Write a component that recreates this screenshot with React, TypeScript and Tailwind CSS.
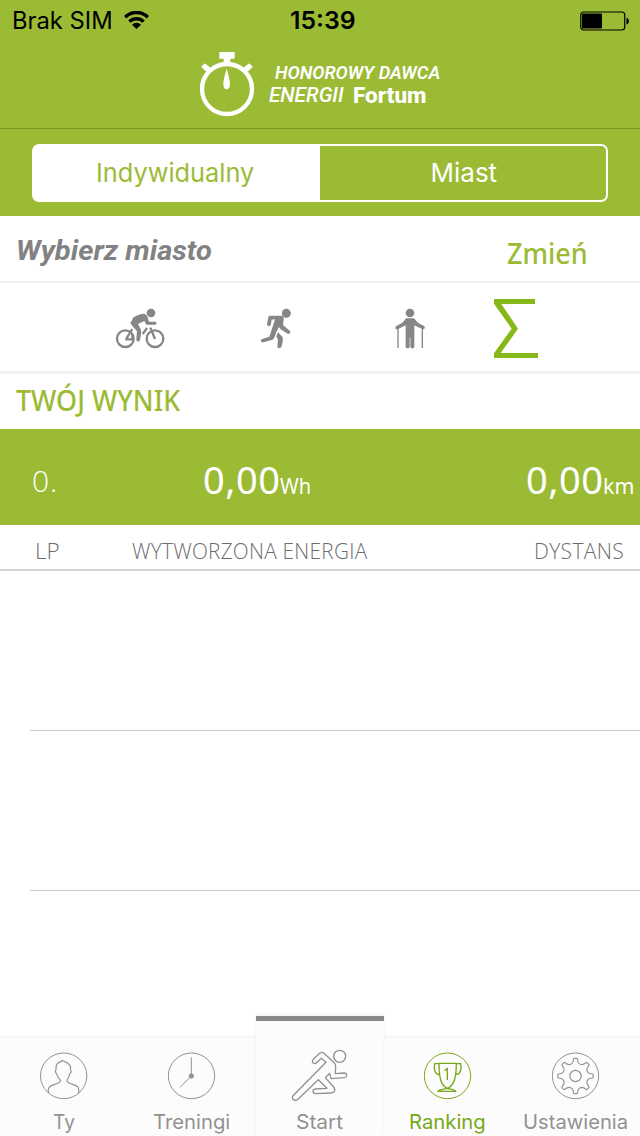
import { useLayoutEffect, useRef, useState } from "react";
import type { ReactNode } from "react";

const NOTO = "font-['Noto_Sans','Open_Sans',sans-serif]";
const OPEN = "font-['Open_Sans','Noto_Sans',sans-serif]";
const ROBOTO = "font-['Roboto','Noto_Sans',sans-serif]";
const INTER = "font-['Inter',sans-serif]";

/** One line of text, condensed or widened horizontally to fill `width` pixels. */
function Fit({ width, className = "", children }: { width: number; className?: string; children: ReactNode }) {
  const ref = useRef<HTMLSpanElement>(null);
  const [scale, setScale] = useState(1);
  useLayoutEffect(() => {
    if (ref.current) setScale(width / ref.current.offsetWidth);
  }, [width]);
  return (
    <span className="block shrink-0" style={{ width }}>
      <span
        ref={ref}
        className={`inline-block origin-left whitespace-nowrap leading-none align-top ${className}`}
        style={{ transform: `scaleX(${scale})` }}
      >
        {children}
      </span>
    </span>
  );
}

function StatusBar() {
  return (
    <div className="grid h-10 grid-cols-3 items-center pt-px text-black">
      <div className="flex items-center gap-[11px] pl-[12px]">
        <Fit width={101} className={`${INTER} text-[24px]`}>Brak SIM</Fit>
        <svg className="-mt-0.5 h-[18px] w-[25px]" viewBox="0 0 25 18" fill="none" stroke="black" strokeWidth="3.400">
          <path d="M1.2 6.2a16 16 0 0 1 22.6 0" />
          <path d="M5.4 10.6a10.2 10.2 0 0 1 14.2 0" />
          <path d="M12.5 18 8 13.700a6 6 0 0 1 9 0z" fill="black" stroke="none" />
        </svg>
      </div>
      <div className="flex justify-center pl-1.5 pt-px">
        <Fit width={66} className={`${INTER} text-[24px] font-semibold`}>15:39</Fit>
      </div>
      <div className="flex justify-end pr-[10px]">
        <svg className="h-5 w-[50px]" viewBox="0 0 50 20">
          <rect x="0.75" y="1" width="44" height="18" rx="3" fill="none" stroke="black" strokeWidth="1.2" />
          <rect x="2" y="2.6" width="20" height="15" rx="1" fill="black" />
          <path d="M46.5 6.8c3.2.8 3.2 6 0 6.600z" fill="black" />
        </svg>
      </div>
    </div>
  );
}

function Logo() {
  return (
    <div className="flex h-[88px] pl-[199px] pt-[11px]">
      <svg className="h-[66px] w-[56px]" viewBox="27 18 168 198" fill="#fff">
        <circle cx="111" cy="132" r="75" fill="none" stroke="#fff" strokeWidth="13" />
        <path d="M90 21h42q2 0 2 2v16q0 2-2 2h-11v12h-20V41H90q-2 0-2-2V23q0-2 2-2z" />
        <path d="M110 71c4 14 10 32 10 46 0 10-4 16-10 16s-10-6-10-16c0-14 6-32 10-46z" />
        <path d="M37 65l8-7 13 11-9 8zM185 65l-8-7-13 11 9 8z" stroke="#fff" strokeWidth="5" strokeLinejoin="round" />
      </svg>
      <div className="pl-[14px] pt-[13px] text-white">
        <div className="h-[18px] pl-1.5">
          <Fit width={165} className={`${ROBOTO} text-[18px] font-semibold italic`}>HONOROWY DAWCA</Fit>
        </div>
        <div className="flex gap-[9px] pt-[3px]">
          <Fit width={75} className={`${ROBOTO} text-[21px] font-medium italic`}>ENERGII</Fit>
          <Fit width={73} className={`${ROBOTO} -mt-px text-[22.5px] font-extrabold`}>Fortum</Fit>
        </div>
      </div>
    </div>
  );
}

function Segments() {
  return (
    <div className="h-[87px] px-8 pt-[15px]">
      <div className="flex h-[58px] overflow-hidden rounded-[7px] bg-white">
        <div className="flex w-72 items-center justify-center pr-0.5 text-[#9bbb35]">
          <Fit width={158} className={`${INTER} text-[26px]`}>Indywidualny</Fit>
        </div>
        <div className="my-0.5 mr-0.5 flex flex-1 items-center justify-center rounded-r-[5px] bg-[#9cbb35] pl-0.5 text-white">
          <Fit width={67} className={`${INTER} text-[26px]`}>Miast</Fit>
        </div>
      </div>
    </div>
  );
}

function Sports() {
  return (
    <div className="flex h-[91px] items-start border-b-[3px] border-[#f2f2f2] pl-[115px] pt-4 text-[#868686]">
      <svg className="mt-2 h-[42px] w-[50px]" viewBox="45 51 150 126" fill="currentColor">
        <g fill="none" stroke="currentColor" strokeWidth="7">
          <circle cx="76" cy="146" r="25" />
          <circle cx="165" cy="146" r="25" />
          <path d="M76 148h21v-15M79 146l18-29M165 147l-14-34M128 132l13-18" />
        </g>
        <circle cx="153" cy="69" r="13" />
        <path d="M97 85c10-8 23-13 32-14 7 0 12 4 14 11l4 13h18c6 0 6 9 0 9h-22c-4 0-6-2-7-6l-3-5-19 9 8 16c3 5 0 25-2 31-2 8-12 7-11-1l2-24-17-20c-4-5-2-10 4-14z" />
      </svg>
      <svg className="ml-[95px] mt-2 h-[42px] w-8" viewBox="60 51 96 126" fill="currentColor">
        <circle cx="139" cy="70" r="13.500" />
        <path d="M88 77h36c6 1 8 5 7 11l-2 17 20 17c5 5 0 11-6 9l-22-14-4-6-9 17c-4 14-6 19-13 22l-25 7c-8 1-10-8-3-10l21-7 8-24 9-28-10 1-3 15c-2 6-11 5-11-1l4-21c1-3 1-4 3-5z" />
        <path d="M114 127l13 13c4 5-1 27-3 31-2 5-12 5-12-2l2-19-5-11z" />
      </svg>
      <svg className="ml-[102px] mt-2 h-[42px] w-8" viewBox="462 51 96 126" fill="currentColor">
        <circle cx="510" cy="69" r="13" />
        <path d="M499 85h22c6 4 8 9 14 14l17 9c5 3 2 11-4 10l-25-12v64c-1 6-11 6-12 0v-27h-2v27c-1 6-11 6-12 0v-64l-24 12c-7 2-9-6-4-10l17-9c6-5 8-10 13-14z" />
        <path d="M474 116v58M547 116v58" stroke="currentColor" strokeWidth="4" />
      </svg>
      <svg className="ml-[68px] h-[60px] w-[45px]" viewBox="42 27 135 180" fill="#86b817">
        <path d="M42 27h123v15H64l50 74-52 73h112v15H42v-14l53-74L42 41z" />
      </svg>
    </div>
  );
}

function Score() {
  return (
    <div className={`${NOTO} flex h-24 items-start text-white`}>
      <div className="w-[203px] pl-8 pt-[37px]">
        <Fit width={26} className={`${OPEN} text-[30px] font-light tracking-[1px]`}>0.</Fit>
      </div>
      <div className="flex w-[323px] pt-[30px]">
        <Fit width={77} className="text-[39px] tracking-[0.5px]">0,00</Fit>
        <Fit width={31} className="mt-[15px] text-[22px]">Wh</Fit>
      </div>
      <div className="flex pt-[30px]">
        <Fit width={77} className="text-[39px] tracking-[0.5px]">0,00</Fit>
        <Fit width={31} className="mt-[15px] text-[22px]">km</Fit>
      </div>
    </div>
  );
}

function Columns() {
  return (
    <div className="flex h-[46px] border-b-2 border-[#d4d4d4] pt-[15px] text-[#6c6c6c]">
      <div className="w-[132px] pl-[35px]">
        <Fit width={25} className={`${OPEN} text-[22.5px] font-light`}>LP</Fit>
      </div>
      <div className="w-[402px]">
        <Fit width={235} className={`${OPEN} text-[22.5px] font-light tracking-[0.3px]`}>WYTWORZONA ENERGIA</Fit>
      </div>
      <Fit width={90} className={`${OPEN} text-[22.5px] font-light tracking-[0.3px]`}>DYSTANS</Fit>
    </div>
  );
}

function Tab({ label, width, active, raised, children }: {
  label: string; width: number; active?: boolean; raised?: boolean; children: ReactNode;
}) {
  return (
    <div className={`flex w-32 flex-col items-center bg-[#fcfcfc] ${active ? "text-[#78a818]" : "text-[#929292]"} ${
      raised ? "h-[120px] border-t-[5px] border-[#888888] pt-[28px]" : "h-[98px] pt-[14px]"}`}>
      <div className={`flex flex-col items-center ${raised ? "h-[63px]" : "h-[60px]"}`}>{children}</div>
      <div className="pr-px">
        <Fit width={width} className={`${INTER} text-[20px]`}>{label}</Fit>
      </div>
    </div>
  );
}

const GEAR_SEGMENT = "M-10-38Q-7-41-6-51-6-53-4-53H4Q6-53 6-51 7-41 10-38 15-34 19.8-33.9";

function TabBar() {
  return (
    <div className="flex h-[120px] items-end">
      <div className="flex shadow-[0_-2px_3px_rgba(0,0,0,0.05)]">
        <Tab label="Ty" width={22}>
          <svg className="h-12 w-12" viewBox="60 126 144 144" fill="none" stroke="currentColor" strokeWidth="3" strokeLinejoin="round">
            <ellipse cx="131" cy="197.500" rx="69.500" ry="68.500" />
            <path d="M86 248c-5-13 3-20 16-24 14-4 22-8 19-14-8-7-10-12-11-19-5-3-4-9-2-13-1-14 6-22 16-23l1-4c13 4 24 9 27 21l-1 7c4 4 3 9-2 12-1 8-4 14-8 19-2 6 6 10 19 14 14 4 20 11 15 24" strokeWidth="3.500" />
          </svg>
        </Tab>
        <Tab label="Treningi" width={77}>
          <svg className="h-12 w-12" viewBox="444 126 144 144" fill="none" stroke="currentColor" strokeWidth="3">
            <ellipse cx="514.500" cy="197.500" rx="69.500" ry="68.500" />
            <path d="M514 142v56l-34 34" />
            <circle cx="514" cy="198" r="6.500" fill="currentColor" />
          </svg>
        </Tab>
      </div>
      <div className="shadow-[0_-1px_4px_rgba(0,0,0,0.07)]">
        <Tab label="Start" width={47} raised>
          <svg className="h-[53px] w-[58px]" viewBox="153 117 174 159" fill="none" stroke="currentColor" strokeWidth="4" strokeLinejoin="round">
            <circle cx="299" cy="139" r="18" />
            <path d="M258 157 244 145 230 158C221 164 213 157 220 148L239 130Q246 124 252 130L281 157Q287 161 287 169L286 191 314 189C322 190 322 201 314 203L273 206 269 190 256 203 281 231Q288 240 280 247 277 249 270 249L226 251C217 250 216 239 226 237L261 235 235 209 174 268C165 276 152 266 159 257Z" />
          </svg>
        </Tab>
      </div>
      <div className="flex shadow-[0_-2px_3px_rgba(0,0,0,0.05)]">
        <Tab label="Ranking" width={77} active>
          <svg className="h-12 w-12" viewBox="72 126 144 144" fill="none" stroke="currentColor" strokeWidth="3" strokeLinejoin="round">
            <ellipse cx="142.500" cy="197.500" rx="69.500" ry="68.500" />
            <path d="M117 160h52c0 22-1 43-9 58-5 9-10 15-17 17-7-2-13-8-18-17-8-15-8-36-8-58zM117 161h-13c-3 14 0 28 8 32l7-1M169 161h13c3 14 0 28-8 32l-7-1" strokeWidth="4" />
            <path d="M114 244h53c-2-6-16-6-24-9-10 3-26 3-29 9z" strokeWidth="4" />
            <path d="M134 182l8-7v35" strokeWidth="4" />
          </svg>
        </Tab>
        <Tab label="Ustawienia" width={105}>
          <svg className="h-12 w-12" viewBox="456 126 144 144" fill="none" stroke="currentColor" strokeWidth="3" strokeLinejoin="round">
            <ellipse cx="526.500" cy="197.500" rx="69.500" ry="68.500" />
            <circle cx="526.500" cy="198" r="17" strokeWidth="3.500" />
            <g transform="translate(526.500 198)" strokeWidth="3.500">
              {[0, 45, 90, 135, 180, 225, 270, 315].map((angle) => (
                <path key={angle} d={GEAR_SEGMENT} transform={`rotate(${angle})`} />
              ))}
            </g>
          </svg>
        </Tab>
      </div>
    </div>
  );
}

export default function App() {
  return (
    <div className="flex h-[1136px] w-[640px] flex-col overflow-hidden bg-white">
      <header className="bg-[#9cbb35]">
        <StatusBar />
        <Logo />
        <div className="h-px bg-[#76941f]" />
        <Segments />
      </header>
      <div className="flex h-[67px] justify-between border-b-2 border-[#f1f1f1] pl-4 pr-[52px]">
        <div className="pt-[22px]">
          <Fit width={196} className={`${ROBOTO} text-[27px] font-bold italic text-[#828282]`}>Wybierz miasto</Fit>
        </div>
        <div className="pt-[22px]">
          <Fit width={81} className={`${NOTO} text-[29px] font-medium text-[#9bbb35]`}>Zmień</Fit>
        </div>
      </div>
      <Sports />
      <div className="h-[55px] pl-4 pt-[12px]">
        <Fit width={164} className={`${NOTO} text-[28px] font-medium text-[#9bbb35]`}>TWÓJ WYNIK</Fit>
      </div>
      <div className="bg-[#9cbb35]">
        <Score />
      </div>
      <Columns />
      <div className="flex-1 pl-[30px]">
        <div className="h-40 border-b border-[#c8c7cc]" />
        <div className="h-40 border-b border-[#c8c7cc]" />
      </div>
      <TabBar />
    </div>
  );
}
